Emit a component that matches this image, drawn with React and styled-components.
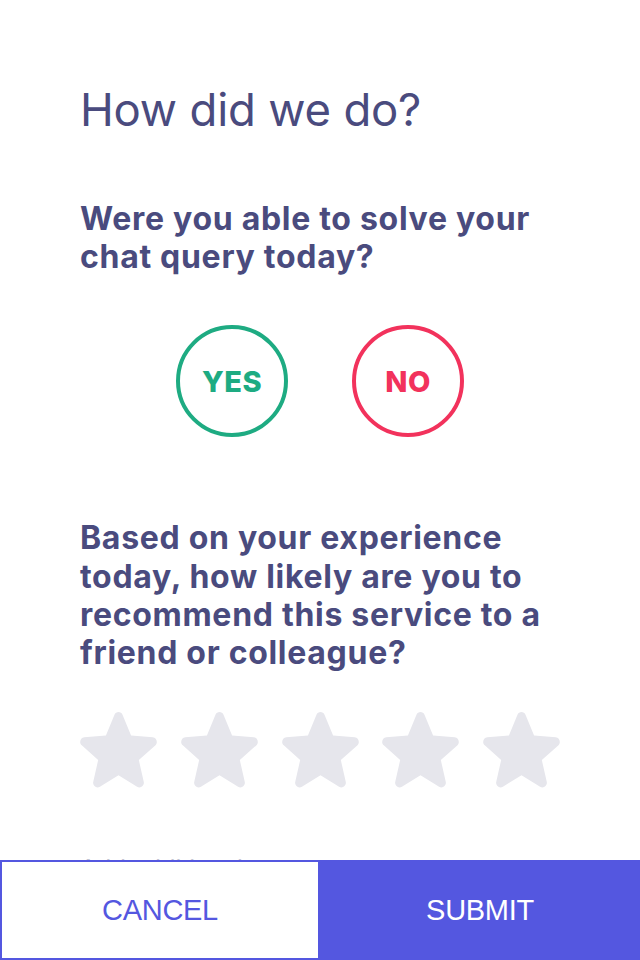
import React, { useState } from 'react'
import styled, { createGlobalStyle } from 'styled-components'

const GlobalStyle = createGlobalStyle`
  html, body {
    margin: 0;
    padding: 0;
    background: #ffffff;
  }
  body {
    font-family: Inter, "Noto Sans", sans-serif;
    color: #4a4b7e;
  }
`

const Page = styled.div`
  padding: 78px 80px 0;
  height: 960px;
  box-sizing: border-box;
  overflow: hidden;
`

const Title = styled.h1`
  margin: 0;
  font-size: 45.5px;
  line-height: 64px;
  font-weight: 400;
  letter-spacing: -0.2px;
  color: #4a4b7e;
`

const Question = styled.h2`
  margin: ${props => props.$top || '54px'} 0 0;
  font-size: 32px;
  line-height: 38.2px;
  font-weight: 700;
  letter-spacing: 0.7px;
  color: #4a4b7e;
`

const Choices = styled.div`
  display: flex;
  justify-content: center;
  gap: 64px;
  margin-top: 49px;
`

const Choice = styled.button`
  width: 112px;
  height: 112px;
  border-radius: 50%;
  border: 4px solid ${props => props.$color};
  background: #fff;
  color: ${props => props.$color};
  font-family: Inter, sans-serif;
  font-size: 29px;
  font-weight: 800;
  letter-spacing: 0.5px;
  display: flex;
  align-items: center;
  justify-content: center;
  padding: 0;
  cursor: pointer;
`

const Stars = styled.div`
  display: flex;
  justify-content: space-between;
  margin-top: 40px;
  width: 480px;
`

const Star = styled.svg`
  width: 77px;
  height: 76px;
  display: block;
  cursor: pointer;
`

const Comments = styled.textarea`
  display: block;
  margin-top: 66px;
  width: 100%;
  height: 80px;
  border: none;
  resize: none;
  padding: 0;
  font-family: Inter, sans-serif;
  font-size: 24px;
  color: #4a4b7e;
  outline: none;
  &::placeholder {
    color: #c4c5d2;
  }
`

const Footer = styled.div`
  position: fixed;
  left: 0;
  right: 0;
  bottom: 0;
  height: 100px;
  display: grid;
  grid-template-columns: 318px 1fr;
`

const FooterButton = styled.button`
  border: 2px solid #5457e0;
  border-right: none;
  margin: 0;
  background: ${props => (props.$primary ? '#5457e0' : '#ffffff')};
  color: ${props => (props.$primary ? '#ffffff' : '#5457e0')};
  font-family: "Liberation Sans", Arial, sans-serif;
  font-size: 29px;
  font-weight: 400;
  letter-spacing: -0.3px;
  cursor: pointer;
`

function StarIcon({ active }) {
  return (
    <Star viewBox="3.4 3.55 17.2 16.5" preserveAspectRatio="none">
      <path
        fill={active ? '#f6b93b' : '#e6e6ec'}
        d="M12 17.27l4.15 2.51c.76.46 1.69-.22 1.49-1.08l-1.1-4.72 3.67-3.18c.67-.58.31-1.68-.57-1.75l-4.83-.41-1.89-4.46c-.34-.81-1.5-.81-1.84 0L9.19 8.63l-4.83.41c-.88.07-1.24 1.17-.57 1.75l3.67 3.18-1.1 4.72c-.2.86.73 1.54 1.49 1.08l4.15-2.5z"
      />
    </Star>
  )
}

export default function App() {
  const [solved, setSolved] = useState(null)
  const [rating, setRating] = useState(0)
  return (
    <>
      <GlobalStyle />
      <Page>
        <Title>How did we do?</Title>
        <Question $top="58px">Were you able to solve your chat query today?</Question>
        <Choices>
          <Choice $color="#1eab82" onClick={() => setSolved(true)} aria-pressed={solved === true}>YES</Choice>
          <Choice $color="#f2325c" onClick={() => setSolved(false)} aria-pressed={solved === false}>NO</Choice>
        </Choices>
        <Question $top="82px">
          Based on your experience today, how likely are you to recommend this service to a friend or colleague?
        </Question>
        <Stars>
          {[1, 2, 3, 4, 5].map(i => (
            <span key={i} onClick={() => setRating(i)}>
              <StarIcon active={i <= rating} />
            </span>
          ))}
        </Stars>
        <Comments placeholder="Add additional comments" />
      </Page>
      <Footer>
        <FooterButton>CANCEL</FooterButton>
        <FooterButton $primary>SUBMIT</FooterButton>
      </Footer>
    </>
  )
}
